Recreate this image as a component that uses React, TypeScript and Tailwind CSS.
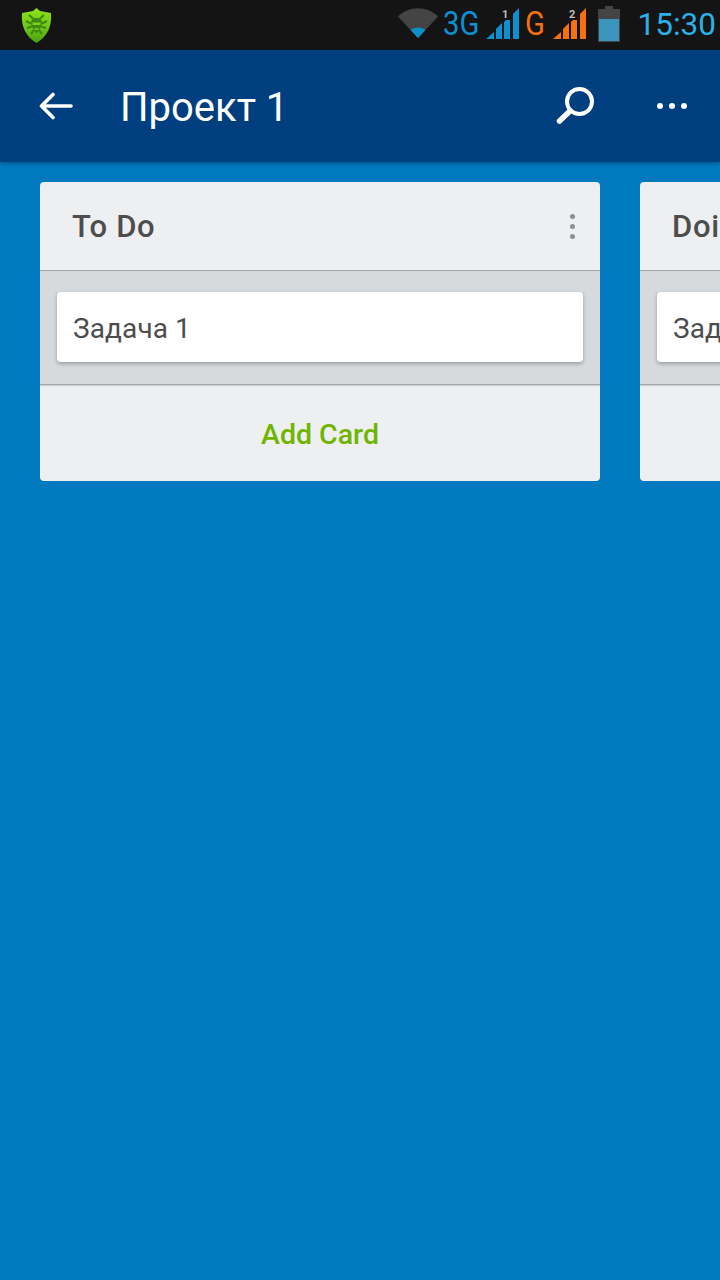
import React from "react";

function Shield() {
  return (
    <svg width="31" height="35" viewBox="0 0 31 35" className="block">
      <defs>
        <linearGradient id="sg" x1="0" y1="0" x2="0" y2="1">
          <stop offset="0" stopColor="#8ee21c" />
          <stop offset="0.6" stopColor="#6cc416" />
          <stop offset="1" stopColor="#46a012" />
        </linearGradient>
      </defs>
      <path d="M15.500 0 L19 3 L30 5 C31 18 27 28 15.500 35 C4 28 0 18 1 5 L12 3 Z" fill="url(#sg)" />
      <path d="M15.500 10c3.500 0 5.500 2 5.500 5s-2 5-3 7.500l-2.500 3-2.500-3c-1-2.500-3-4.500-3-7.500s2-5 5.500-5z" fill="#3d8a10" />
      <path d="M8 7l4.500 4M23 7l-4.500 4M5 13l5 2.500M26 13l-5 2.500M6 20l5-1.500M25 20l-5-1.500M10 26l3-4M21 26l-3-4" stroke="#3d8a10" strokeWidth="2.200" fill="none" />
      <path d="M11.500 14.500h8v2.500h-8z" fill="#7ed11a" />
      <path d="M13.500 20h4v2h-4z" fill="#6cc416" />
    </svg>
  );
}

function Wifi() {
  return (
    <svg width="40" height="30" viewBox="0 0 40 30" className="block">
      <path d="M0 8.500 C11 -2.500 29 -2.500 40 8.500 L20 30 Z" fill="#444444" />
      <path d="M12.500 22 C16.500 18.500 23.500 18.500 27.500 22 L20 30 Z" fill="#0e8fca" />
    </svg>
  );
}

function Signal({ color, num }: { color: string; num: string }) {
  return (
    <div className="relative w-[33px] h-[31px]">
      <svg width="33" height="31" viewBox="0 0 33 31" className="block">
        <path d="M0 31 L8 31 L8 24 Z" fill={color} />
        <path d="M10 31 L16 31 L16 15 L10 21 Z" fill={color} />
        <path d="M18 31 L24 31 L24 8 L18 14 Z" fill={color} />
        <path d="M27 31 L33 31 L33 0 L27 6 Z" fill={color} />
      </svg>
      <span className="absolute left-[15px] top-[1px] w-[9px] h-[11px] bg-[#141414] text-center text-[11px] leading-[11px] font-bold text-[#bdbdbd]">{num}</span>
    </div>
  );
}

function Battery() {
  return (
    <svg width="22" height="36" viewBox="0 0 22 36" className="block">
      <path d="M7 0h8v3h7v33H0V3h7z" fill="#444444" />
      <rect x="1" y="13" width="20" height="22" fill="#3a94bc" />
    </svg>
  );
}

function StatusBar() {
  return (
    <div className="h-[50px] bg-[#141414] flex items-center shrink-0 relative z-10">
      <div className="ml-[21px]"><Shield /></div>
      <div className="ml-auto flex items-center">
        <div className="-mt-[4px]"><Wifi /></div>
        <div className="ml-[5px] w-[37px] h-[36px] flex items-center -mt-[4px]">
          <span className="text-[34px] leading-none font-normal text-[#0d90d2] origin-left scale-x-[0.86] whitespace-nowrap">3G</span>
        </div>
        <div className="ml-[6px] -mt-[4px]"><Signal color="#0d90d2" num="1" /></div>
        <div className="ml-[6px] w-[21px] h-[36px] flex items-center -mt-[4px]">
          <span className="text-[34px] leading-none font-normal text-[#f5700f] origin-left scale-x-[0.86]">G</span>
        </div>
        <div className="ml-[7px] -mt-[4px]"><Signal color="#f5700f" num="2" /></div>
        <div className="ml-[12px] -mt-[2px]"><Battery /></div>
        <span className="ml-[18px] mr-[4px] text-[31.500px] leading-none font-normal text-[#2bb0e8]">15:30</span>
      </div>
    </div>
  );
}

function Header() {
  return (
    <div className="h-[112px] bg-[#003f7f] flex items-center shrink-0 shadow-[0_2px_3px_rgba(0,0,0,0.25)] relative">
      <svg width="34" height="30" viewBox="0 0 34 30" className="ml-[39px] block">
        <path d="M32 15H3M14 3.500 L2.500 15 L14 26.500" stroke="#fff" strokeWidth="3.600" strokeLinecap="round" strokeLinejoin="round" fill="none" />
      </svg>
      <span className="ml-[47px] mt-[4px] text-[40px] leading-none text-white">Проект 1</span>
      <svg width="40" height="40" viewBox="0 0 40 40" className="ml-auto block">
        <circle cx="24.500" cy="15.500" r="12.500" stroke="#fff" strokeWidth="4" fill="none" />
        <path d="M15 25 L4.500 35" stroke="#fff" strokeWidth="5.500" strokeLinecap="round" />
      </svg>
      <div className="ml-[62px] mr-[33px] flex gap-[6px]">
        <div className="w-[6px] h-[6px] rounded-full bg-white" />
        <div className="w-[6px] h-[6px] rounded-full bg-white" />
        <div className="w-[6px] h-[6px] rounded-full bg-white" />
      </div>
    </div>
  );
}

function List({ title }: { title: string }) {
  return (
    <div className="w-[560px] shrink-0 rounded-[4px] bg-[#edeff1] overflow-hidden">
      <div className="h-[89px] pl-[32px] pr-[25px] flex items-center justify-between border-b border-[#a3a6a9] shadow-[0_1px_1px_rgba(0,0,0,0.12)] relative">
        <span className="text-[31px] leading-none font-medium tracking-[0.7px] text-[#4d4d4d] whitespace-nowrap">{title}</span>
        <div className="flex flex-col gap-[5px]">
          <div className="w-[5px] h-[5px] rounded-full bg-[#8b9095]" />
          <div className="w-[5px] h-[5px] rounded-full bg-[#8b9095]" />
          <div className="w-[5px] h-[5px] rounded-full bg-[#8b9095]" />
        </div>
      </div>
      <div className="h-[114px] bg-[#d6dadc] border-b border-[#a3a6a9] shadow-[0_1px_1px_rgba(0,0,0,0.12)] relative px-[17px] pt-[21px]">
        <div className="h-[70px] bg-white rounded-[4px] flex items-center pl-[16px] shadow-[0_2px_4px_rgba(0,0,0,0.28)]">
          <span className="mt-[3px] text-[28px] leading-none tracking-[0.1px] text-[#4d4d4d] whitespace-nowrap">Задача 1</span>
        </div>
      </div>
      <div className="h-[96px] flex items-center justify-center">
        <span className="mt-[4px] text-[28.500px] leading-none font-medium text-[#70b500]">Add Card</span>
      </div>
    </div>
  );
}

export default function App() {
  return (
    <div className="w-[720px] h-[1280px] bg-[#0079bf] flex flex-col overflow-hidden font-['Roboto',sans-serif]">
      <StatusBar />
      <Header />
      <div className="flex gap-[40px] pl-[40px] pt-[20px] items-start">
        <List title="To Do" />
        <List title="Doing" />
      </div>
    </div>
  );
}
